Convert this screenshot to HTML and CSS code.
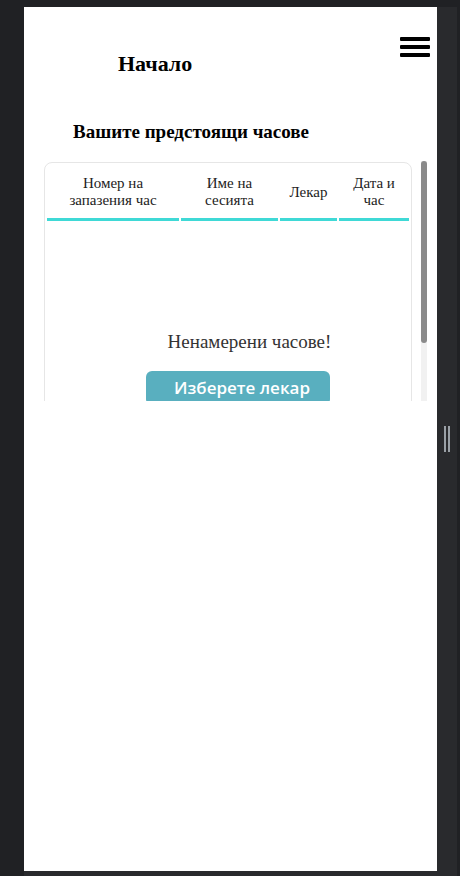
FILE: index.html
```html
<!DOCTYPE html>
<html lang="bg">
<head>
<meta charset="utf-8">
<title>Начало</title>
<link rel="stylesheet" href="styles.css">
</head>
<body>
<div class="device">
  <div class="screen">
    <header class="topbar">
      <h1 class="brand">Начало</h1>
      <button class="menu" aria-label="Меню">
        <svg width="30" height="20" viewBox="0 0 30 20">
          <rect x="0" y="0" width="30" height="4" rx="1" fill="#000"/>
          <rect x="0" y="8" width="30" height="4" rx="1" fill="#000"/>
          <rect x="0" y="16" width="30" height="4" rx="1" fill="#000"/>
        </svg>
      </button>
    </header>
    <h2 class="section-title">Вашите предстоящи часове</h2>
    <div class="scroll">
      <div class="card">
        <table class="appointments">
          <colgroup>
            <col class="c1"><col class="c2"><col class="c3"><col class="c4">
          </colgroup>
          <thead>
            <tr>
              <th>Номер на запазения час</th>
              <th>Име на сесията</th>
              <th>Лекар</th>
              <th>Дата и час</th>
            </tr>
          </thead>
        </table>
        <div class="empty">
          <p class="empty-text">Ненамерени часове!</p>
          <a class="btn" href="#">Изберете лекар</a>
        </div>
      </div>
      <div class="scrollbar"><span class="thumb"></span></div>
    </div>
  </div>
  <div class="rim"><span class="handle"></span></div>
</div>
</body>
</html>
```
FILE: styles.css
```css
html, body {
  margin: 0;
  padding: 0;
}
body {
  background: #202124;
  height: 876px;
  overflow: hidden;
  font-family: "Liberation Serif", "Times New Roman", serif;
}
.device {
  display: flex;
  width: 433px;
  margin: 7px 0 0 24px;
  padding-bottom: 5px;
  background: #292a2d;
}
.screen {
  flex: 0 0 413px;
  height: 864px;
  background: #fff;
  overflow: hidden;
}
.rim {
  flex: 1;
  display: flex;
  align-items: center;
  justify-content: center;
}
.handle {
  display: block;
  width: 2px;
  height: 26px;
  border-left: 2px solid #9aa0a6;
  border-right: 2px solid #9aa0a6;
}
.topbar {
  display: flex;
  justify-content: space-between;
  align-items: flex-start;
  padding: 30px 7px 0 94px;
}
.brand {
  margin: 13.5px 0 0;
  font-size: 22px;
  line-height: 25px;
  font-weight: bold;
  color: #000;
}
.menu {
  border: 0;
  padding: 0;
  margin: 0;
  background: none;
  display: block;
  line-height: 0;
}
.section-title {
  margin: 45.5px 0 18px;
  padding-left: 49px;
  font-size: 19px;
  line-height: 22px;
  font-weight: bold;
  color: #000;
}
.scroll {
  display: flex;
  align-items: flex-start;
  margin-left: 20px;
  width: 383px;
  height: 240px;
  overflow: hidden;
}
.scrollbar {
  flex: 0 0 6px;
  height: 240px;
  margin-left: auto;
  background: #f1f1f1;
}
.thumb {
  display: block;
  height: 182px;
  border-radius: 3px;
  background: #8a8a8a;
}
.card {
  flex: 0 0 368px;
  box-sizing: border-box;
  margin-top: 1px;
  border: 1px solid #e6e6e6;
  border-radius: 8px;
}
.appointments {
  table-layout: fixed;
  width: 366px;
  border-spacing: 2px;
}
.c1 { width: 132px; }
.c2 { width: 97px; }
.c3 { width: 57px; }
.c4 { width: 70px; }
.appointments th {
  padding: 10px 3px 9px;
  font-size: 15px;
  line-height: 17px;
  font-weight: normal;
  color: #222;
  text-align: center;
  vertical-align: middle;
  border-bottom: 3px solid #3fd9d6;
}
.empty {
  padding: 107px 0 72px;
}
.empty-text {
  margin: 0 0 17.75px;
  padding-left: 43px;
  text-align: center;
  font-size: 19px;
  line-height: 23px;
  color: #333;
}
.btn {
  display: block;
  box-sizing: border-box;
  width: 184px;
  height: 34px;
  margin-left: 101px;
  padding-left: 8px;
  border-radius: 6px;
  background: #59afbf;
  color: #fff;
  text-align: center;
  text-decoration: none;
  font-family: "Open Sans", "Liberation Sans", sans-serif;
  font-weight: 600;
  font-size: 17px;
  line-height: 34px;
}
```
